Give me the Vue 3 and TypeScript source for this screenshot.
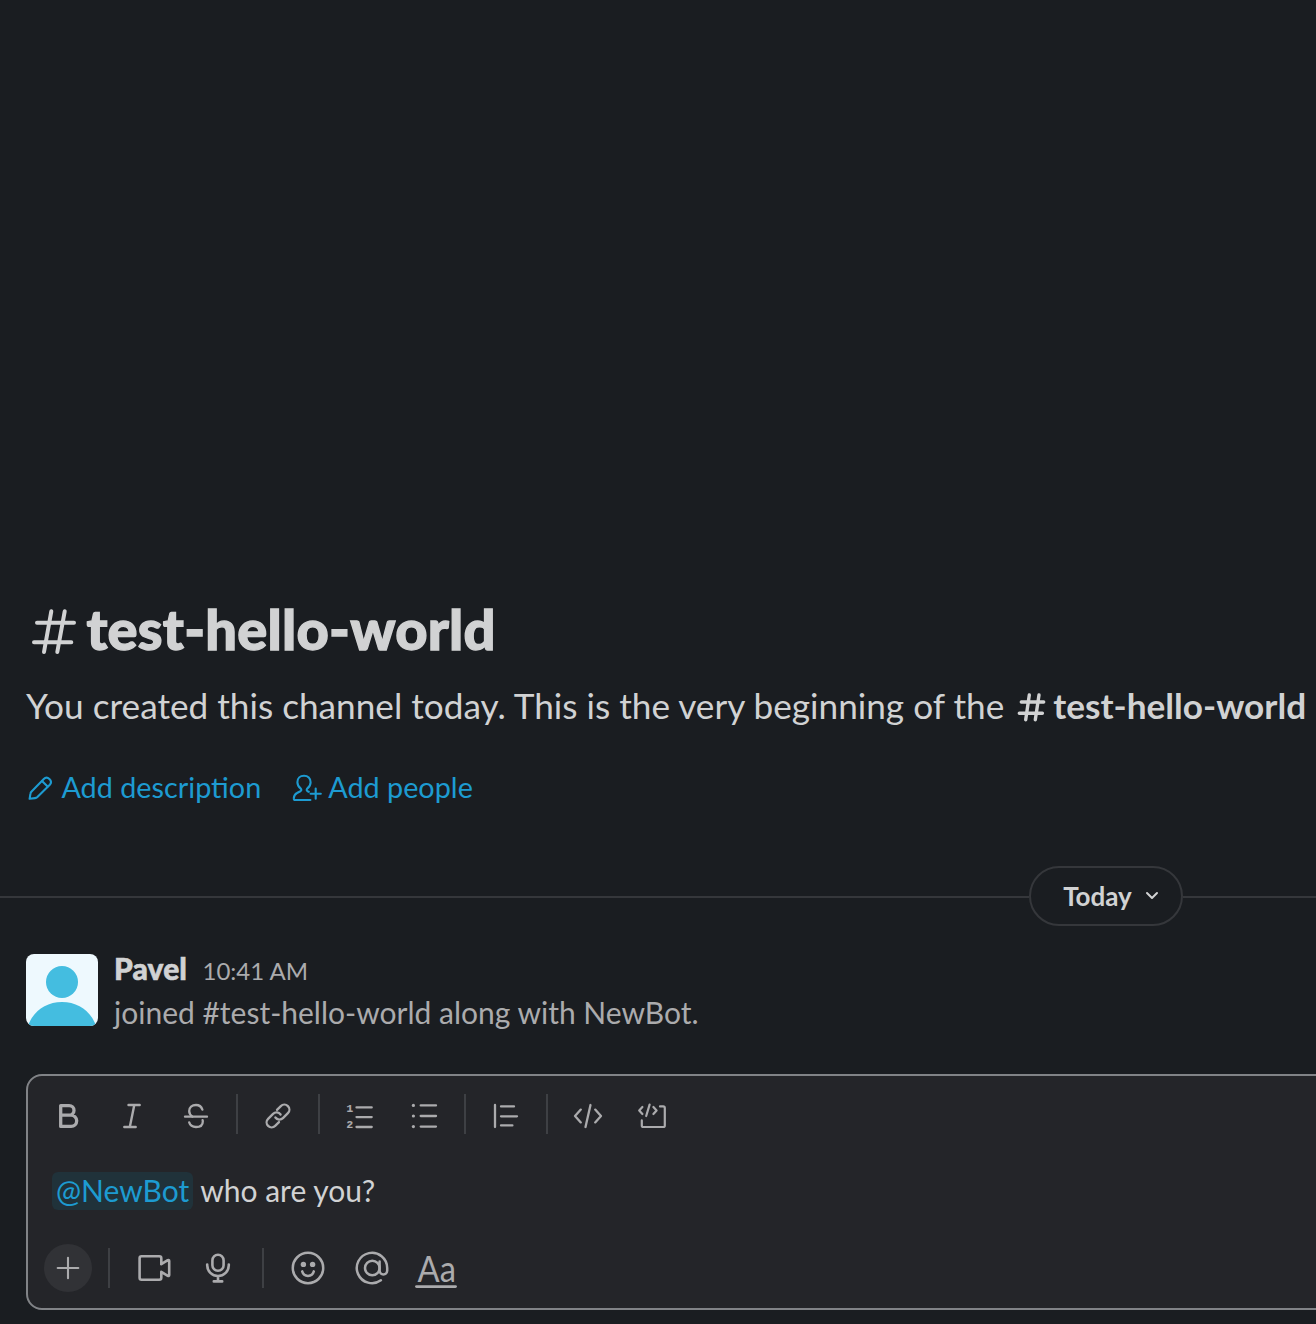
<script setup lang="ts">
interface Icon {
  name: string
  width?: number
  paths?: string[]
  dots?: [number, number, number][]
  labels?: { x: number; y: number; text: string }[]
  transform?: string
}

const formatGroups: Icon[][] = [
  [
    { name: 'bold', width: 3.3, paths: ['M-7.3 -10.4V10.4H3.1a5.6 5.6 0 0 0 0-11.2H-7.3M-7.3 -10.4H1.2a4.8 4.8 0 0 1 0 9.6'] },
    { name: 'italic', width: 2.4, paths: ['M-3.5 -11H7.7M-7.7 11H3.7M2.3 -11L-2.2 11'] },
    {
      name: 'strike',
      width: 2.3,
      paths: [
        'M-11 .7H11',
        'M6.4 -6.4C5.4 -9.4 3 -11 0 -11C-4 -11 -6.8 -8.5 -6.8 -5C-6.8 -2.6 -5.6 -.8 -3.6 .6',
        'M-6.8 6.4C-5.9 9.4 -3.3 11 0 11C4.2 11 6.8 9 6.8 5.4C6.8 4.8 6.7 4.4 6.6 4.1',
      ],
    },
  ],
  [
    {
      name: 'link',
      width: 2.3,
      transform: 'rotate(-45)',
      paths: [
        'M3.6 -5H9a5 5 0 0 1 0 10H2a5 5 0 0 1 -4.9 -5.8',
        'M-3.6 5H-9a5 5 0 0 1 0 -10H-2a5 5 0 0 1 4.9 5.8',
      ],
    },
  ],
  [
    {
      name: 'ordered',
      width: 2.3,
      paths: ['M-3.5 -8.6H11.7M-3.5 1.1H11.7M-3.5 11H11.7'],
      labels: [
        { x: -13.4, y: -4.5, text: '1' },
        { x: -13.4, y: 12, text: '2' },
      ],
    },
    {
      name: 'bulleted',
      width: 2.3,
      paths: ['M-3.3 -10.6H12M-3.3 0H12M-3.3 10.6H12'],
      dots: [[-10.6, -10.6, 1.6], [-10.6, 0, 1.6], [-10.6, 10.6, 1.6]],
    },
  ],
  [{ name: 'quote', width: 2.3, paths: ['M-11 -11V11M-5 -9.6H8M-5 .3H11M-5 9.4H6.4'] }],
  [
    { name: 'code', width: 2.3, paths: ['M-7.2 -6.4L-13 0L-7.2 6.4M7.2 -6.4L13 0L7.2 6.4M2.5 -11L-2.5 11'] },
    {
      name: 'codeblock',
      width: 2.2,
      paths: [
        'M-9.6 -9L-12.8 -5.5L-9.6 -2M1.4 -9L4.6 -5.5L1.4 -2M-2.4 -11.4L-5.8 0',
        'M8 -9.6H11.2a1.6 1.6 0 0 1 1.6 1.6V9.4a1.6 1.6 0 0 1 -1.6 1.6H-8.6a1.6 1.6 0 0 1 -1.6 -1.6V4.4',
      ],
    },
  ],
]

const insertGroups: Icon[][] = [
  [
    {
      name: 'video',
      width: 2.6,
      paths: [
        'M7.3 -3.8V-9.8a2 2 0 0 0 -2 -2H-12.4a2 2 0 0 0 -2 2V9.8a2 2 0 0 0 2 2H5.3a2 2 0 0 0 2 -2V3.8L13.8 7.8Q15.2 8.5 15.2 7V-7Q15.2 -8.5 13.8 -7.8L7.3 -3.8',
      ],
    },
    {
      name: 'microphone',
      width: 2.6,
      paths: [
        'M0 -13.2A5.6 5.6 0 0 1 5.6 -7.6V-2.8A5.6 5.6 0 0 1 -5.6 -2.8V-7.6A5.6 5.6 0 0 1 0 -13.2Z',
        'M-10.8 -3.4V-2.8a10.8 10.8 0 0 0 21.6 0V-3.4M0 8V13.3M-4.2 13.4H4.2',
      ],
    },
  ],
  [
    {
      name: 'emoji',
      width: 2.5,
      paths: ['M-15.2 0A15.2 15.2 0 1 0 15.2 0A15.2 15.2 0 1 0 -15.2 0Z', 'M-5.8 3.4C-5 6.4 -2.8 7.9 0 7.9S5 6.4 5.8 3.4'],
      dots: [[-4.6, -3.6, 2.7], [4.6, -3.6, 2.7]],
    },
    {
      name: 'mention',
      width: 2.5,
      paths: [
        'M8.9 12.3A15.2 15.2 0 1 1 15.2 0V2.6a3.8 3.8 0 0 1 -7.6 0V-6.6',
        'M-7 0A7.3 7.3 0 1 0 7.6 0A7.3 7.3 0 1 0 -7 0Z',
      ],
    },
  ],
]
</script>

<template>
  <main class="channel">
    <section class="intro">
      <h1 class="title">
        <svg class="title-hash" viewBox="0 0 48 48"><path d="M9 16.7H46M6 36.3H43.3M23.3 5.3L16 46M36.7 5.3L29.3 46" /></svg>
        <span class="title-text">test-hello-world</span>
      </h1>
      <p class="lead">
        <span class="lead-text">You created this channel today. This is the very beginning of the</span>
        <svg class="lead-hash" viewBox="0 0 30 30"><path d="M5.3 11H27.7M3.3 22.3H26.4M13.3 4L9.7 28.7M23 4L19.3 28.7" /></svg>
        <strong class="lead-name">test-hello-world</strong>
      </p>
      <div class="actions">
        <a class="action describe">
          <svg viewBox="-16 -16 32 32">
            <path d="M-10.4 10.8L-9.6 6Q-9.4 4.6 -8.4 3.6L3.8 -9Q6.5 -11.8 9.4 -9Q12.4 -6 9.8 -3.2L-2.6 9Q-3.6 9.9 -5 10.1Z" />
            <path d="M2 -7L7.6 -1.4" />
          </svg>
          <span>Add description</span>
        </a>
        <a class="action people">
          <svg viewBox="-16 -16 32 32">
            <path d="M3.4 12H-11.8Q-13.4 12 -13.2 10.2C-13 7.6 -12 6 -10 5L-6.6 3.2Q-5 2.2 -6.2 .7C-8.4 -1 -9.6 -3.2 -9.6 -5.8C-9.6 -9.8 -6.9 -12.3 -3 -12.3S3.6 -9.8 3.6 -5.8C3.6 -3.2 2.4 -1 .2 .7Q-1 2.2 .6 3.2L1.8 3.8" />
            <path d="M8.7 .6V10.8M3.6 5.7H13.8" />
          </svg>
          <span>Add people</span>
        </a>
      </div>
    </section>

    <div class="divider">
      <button class="day">
        <span>Today</span>
        <svg viewBox="0 0 16 16"><path d="M3 5L8 10L13 5" /></svg>
      </button>
    </div>

    <article class="message">
      <svg class="avatar" viewBox="0 0 72 72">
        <rect width="72" height="72" fill="#eef9fe" />
        <circle cx="36" cy="28" r="16" />
        <path d="M2 72C7 57 20 48 36 48S65 57 70 72Z" />
      </svg>
      <div class="body">
        <div class="meta"><b class="author">Pavel</b><time class="time">10:41 AM</time></div>
        <p class="text">joined #test-hello-world along with NewBot.</p>
      </div>
    </article>

    <section class="composer">
      <div class="toolbar format">
        <div v-for="(group, g) in formatGroups" :key="g" class="group">
          <button v-for="icon in group" :key="icon.name" class="tool">
            <svg viewBox="-20 -20 40 40" :stroke-width="icon.width">
              <g :transform="icon.transform">
                <path v-for="d in icon.paths" :key="d" :d="d" />
                <circle v-for="(c, i) in icon.dots" :key="i" class="dot" :cx="c[0]" :cy="c[1]" :r="c[2]" />
                <text v-for="l in icon.labels" :key="l.text" class="numeral" :x="l.x" :y="l.y">{{ l.text }}</text>
              </g>
            </svg>
          </button>
        </div>
      </div>

      <div class="input"><span class="mention">@NewBot</span><span class="typed">who are you?</span></div>

      <div class="toolbar insert">
        <button class="plus">
          <svg viewBox="-20 -20 40 40" stroke-width="2.1"><path d="M-10.3 0H10.3M0 -10.3V10.3" /></svg>
        </button>
        <div v-for="(group, g) in insertGroups" :key="g" class="group">
          <button v-for="icon in group" :key="icon.name" class="tool">
            <svg viewBox="-20 -20 40 40" :stroke-width="icon.width">
              <path v-for="d in icon.paths" :key="d" :d="d" />
              <circle v-for="(c, i) in icon.dots" :key="i" class="dot" :cx="c[0]" :cy="c[1]" :r="c[2]" />
            </svg>
          </button>
          <button v-if="g === insertGroups.length - 1" class="tool">
            <svg viewBox="-20 -20 40 40">
              <text class="letters" x="-18.4" y="13.5" textLength="38.4" lengthAdjust="spacingAndGlyphs">Aa</text>
              <path d="M-19.5 18.6H19.5" stroke-width="2.8" />
            </svg>
          </button>
        </div>
      </div>
    </section>
  </main>
</template>

<style>
body {
  background: #1a1d21;
  overflow: hidden;
}
</style>

<style scoped>
.channel {
  box-sizing: border-box;
  height: 1324px;
  padding-top: 598px;
  overflow: hidden;
  background: #1a1d21;
  color: #d1d2d3;
  font-family: Lato, 'Liberation Sans', sans-serif;
  white-space: nowrap;
}
svg {
  display: block;
  flex: none;
  overflow: visible;
  fill: none;
  stroke: currentColor;
  stroke-linecap: round;
  stroke-linejoin: round;
}
button {
  display: flex;
  align-items: center;
  justify-content: center;
  padding: 0;
  border: 0;
  background: none;
  color: inherit;
  font: inherit;
}
h1,
p {
  margin: 0;
}
.intro {
  padding-left: 26px;
}
.title {
  display: flex;
  height: 64px;
  font-size: 56px;
  font-weight: 900;
  line-height: 62px;
}
.title-hash {
  width: 48px;
  height: 48px;
  margin: 8px 0 0 2px;
  stroke-width: 4;
}
.title-text {
  margin-left: 10.5px;
  letter-spacing: 0.22px;
  -webkit-text-stroke: 1.3px currentColor;
}
.lead {
  display: flex;
  height: 48px;
  margin-top: 20px;
  font-size: 35.2px;
  line-height: 46px;
}
.lead-hash {
  width: 30px;
  height: 30px;
  margin: 9px 0 0 12px;
  stroke-width: 3.4;
}
.lead-name {
  margin-left: 7px;
  font-weight: 700;
}
.actions {
  display: flex;
  height: 40px;
  margin-top: 38px;
  color: #1d9bd1;
  font-size: 28.8px;
  line-height: 38px;
}
.action {
  display: flex;
}
.action svg {
  width: 32px;
  height: 32px;
  margin-top: 4px;
  stroke-width: 2.1;
}
.action span {
  margin-left: 5.4px;
}
.describe {
  margin-left: -2px;
}
.people {
  margin-left: 29.6px;
}
.divider {
  display: flex;
  align-items: center;
  height: 60px;
  margin-top: 58px;
}
.divider::before,
.divider::after {
  content: '';
  flex: none;
  width: 1029px;
  height: 2px;
  margin-top: 2px;
  background: #35373b;
}
.day {
  box-sizing: border-box;
  flex: none;
  width: 154px;
  height: 60px;
  padding-left: 11px;
  border: 2px solid #35373b;
  border-radius: 30px;
  font-size: 26px;
  font-weight: 700;
}
.day svg {
  width: 16px;
  height: 16px;
  margin-left: 12px;
  stroke-width: 2;
}
.message {
  display: flex;
  height: 92px;
  margin-top: 28px;
  padding-left: 26px;
}
.avatar {
  width: 72px;
  height: 72px;
  border-radius: 8px;
  overflow: hidden;
  fill: #44bde0;
  stroke: none;
}
.body {
  margin-left: 16px;
}
.meta {
  display: flex;
  align-items: baseline;
  height: 38px;
  margin-top: -5px;
  line-height: 38px;
}
.author {
  font-size: 30px;
  font-weight: 900;
  letter-spacing: 0.1px;
  -webkit-text-stroke: 0.6px currentColor;
}
.time {
  margin-left: 15.5px;
  color: #ababad;
  font-size: 24px;
}
.text {
  margin-top: 3px;
  color: #ababad;
  font-size: 30px;
  line-height: 44px;
}
.composer {
  box-sizing: border-box;
  height: 236px;
  margin: 28px -40px 0 26px;
  padding-top: 12px;
  border: 2px solid #818387;
  border-radius: 16px;
  background: #242529;
}
.toolbar {
  display: flex;
  align-items: center;
  height: 56px;
  padding-left: 12px;
  color: #ababad;
}
.group {
  display: flex;
  align-items: center;
  gap: 8px;
}
.group + .group::before,
.plus + .group::before {
  content: '';
  width: 2px;
  height: 40px;
  margin: 0 4px 4px 12px;
  background: #3e4044;
}
.tool {
  width: 56px;
  height: 56px;
}
.tool svg,
.plus svg {
  width: 40px;
  height: 40px;
}
.dot {
  fill: currentColor;
  stroke: none;
}
.numeral {
  fill: currentColor;
  stroke: currentColor;
  stroke-width: 0.2px;
  font: 700 11px 'Liberation Mono', monospace;
}
.input {
  display: flex;
  align-items: center;
  height: 38px;
  margin-top: 28px;
  padding-left: 24px;
  font-size: 30px;
  line-height: 36px;
}
.mention {
  padding: 0 4px 2px;
  border-radius: 6px;
  background: #20323a;
  color: #1d9bd1;
}
.typed {
  margin-left: 7px;
  padding-bottom: 2px;
}
.insert {
  margin-top: 30px;
  padding-left: 16px;
}
.insert .group::before {
  margin: 0 8px 0 16px;
}
.plus {
  width: 48px;
  height: 48px;
  border-radius: 50%;
  background: #313236;
}
.letters {
  fill: currentColor;
  stroke: none;
  font: 400 36px Lato, sans-serif;
}
</style>
